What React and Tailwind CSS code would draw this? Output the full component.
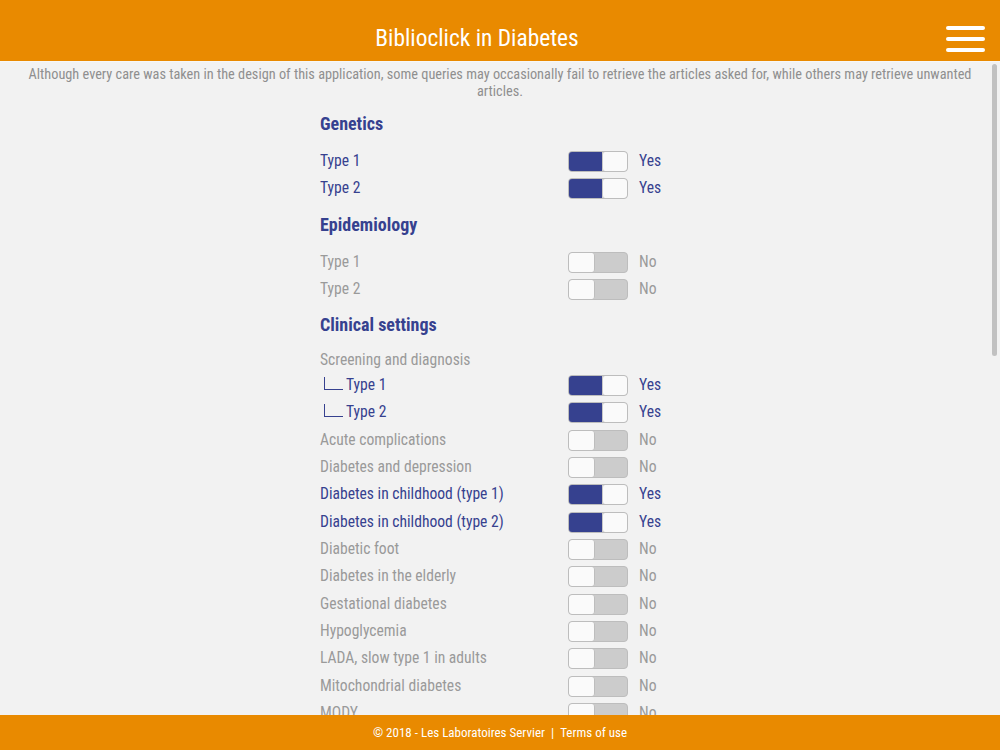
import React from 'react';

const font = { fontFamily: '"Roboto Condensed", "Liberation Sans Narrow", "DejaVu Sans Condensed", Roboto, sans-serif' };

const sections = [
  {
    title: 'Genetics',
    rows: [
      { label: 'Type 1', on: true },
      { label: 'Type 2', on: true }
    ]
  },
  {
    title: 'Epidemiology',
    rows: [
      { label: 'Type 1', on: false },
      { label: 'Type 2', on: false }
    ]
  },
  {
    title: 'Clinical settings',
    rows: [
      { label: 'Screening and diagnosis', group: true },
      { label: 'Type 1', on: true, child: true },
      { label: 'Type 2', on: true, child: true },
      { label: 'Acute complications', on: false },
      { label: 'Diabetes and depression', on: false },
      { label: 'Diabetes in childhood (type 1)', on: true },
      { label: 'Diabetes in childhood (type 2)', on: true },
      { label: 'Diabetic foot', on: false },
      { label: 'Diabetes in the elderly', on: false },
      { label: 'Gestational diabetes', on: false },
      { label: 'Hypoglycemia', on: false },
      { label: 'LADA, slow type 1 in adults', on: false },
      { label: 'Mitochondrial diabetes', on: false },
      { label: 'MODY', on: false }
    ]
  }
];

const Toggle = ({ on }) => (
  <div className="flex w-[60px] h-[21px] rounded-[4px] border border-[#bdbdbd] overflow-hidden bg-[#cccccc]">
    {on ? (
      <>
        <div className="w-[33px] bg-[#36418f]" />
        <div className="flex-1 bg-[#fafafa] rounded-[3px] border-l border-[#c8c8c8]" />
      </>
    ) : (
      <>
        <div className="w-[26px] bg-[#fafafa] rounded-[3px] border-r border-[#bdbdbd]" />
        <div className="flex-1" />
      </>
    )}
  </div>
);

const Row = ({ row }) => {
  if (row.group) {
    return (
      <div className="h-[22.7px] flex items-center text-[15.6px] text-[#9a9a9a]">{row.label}</div>
    );
  }
  const color = row.on ? 'text-[#36418f]' : 'text-[#9a9a9a]';
  return (
    <div className="h-[27.33px] flex items-center">
      <div className={`w-[248px] flex items-center text-[15.6px] ${color}`}>
        {row.child && <span className="inline-block w-[19px] h-[13px] ml-[4px] mr-[3px] mb-[5px] border-l-[1.5px] border-b-[1.5px] border-[#36418f]" />}
        {row.label}
      </div>
      <Toggle on={row.on} />
      <div className={`ml-[11px] text-[15.6px] ${color}`}>{row.on ? 'Yes' : 'No'}</div>
    </div>
  );
};

export default function App() {
  return (
    <div className="h-[750px] flex flex-col bg-[#f2f2f2] overflow-hidden" style={font}>
      <header className="h-[62px] shrink-0 bg-[#e98a00] border-b border-[#f7f7f7] relative flex items-center justify-center">
        <h1 className="text-white text-[23.4px] leading-none mt-[16px] mr-[46px]">Biblioclick in Diabetes</h1>
        <div className="absolute right-[15px] top-[26px] flex flex-col gap-[7px]">
          <span className="block w-[39px] h-[4px] rounded-full bg-white" />
          <span className="block w-[39px] h-[4px] rounded-full bg-white" />
          <span className="block w-[39px] h-[4px] rounded-full bg-white" />
        </div>
      </header>

      <main className="flex-1 relative overflow-hidden">
        <p className="px-[20px] pt-[4px] text-center text-[14.3px] leading-[17px] text-[#8f8f8f]">
          Although every care was taken in the design of this application, some queries may occasionally fail to retrieve the articles asked for, while others may retrieve unwanted articles.
        </p>

        <div className="w-[360px] mx-auto mt-[2px]">
          {sections.map((section) => (
            <div key={section.title}>
              <div className="h-[46px] pt-[10px]">
                <h2 className="text-[18px] leading-[24px] font-bold text-[#36418f]">{section.title}</h2>
              </div>
              {section.rows.map((row, i) => (
                <Row key={i} row={row} />
              ))}
            </div>
          ))}
        </div>

        <div className="absolute right-[3px] top-[2px] w-[5px] h-[292px] rounded-full bg-[#c1c1c1]" />
      </main>

      <footer className="h-[35px] shrink-0 bg-[#e98a00] flex items-center justify-center text-white text-[13px]">
        <span>© 2018 - Les Laboratoires Servier</span>
        <span className="mx-[6px]">|</span>
        <span>Terms of use</span>
      </footer>
    </div>
  );
}
